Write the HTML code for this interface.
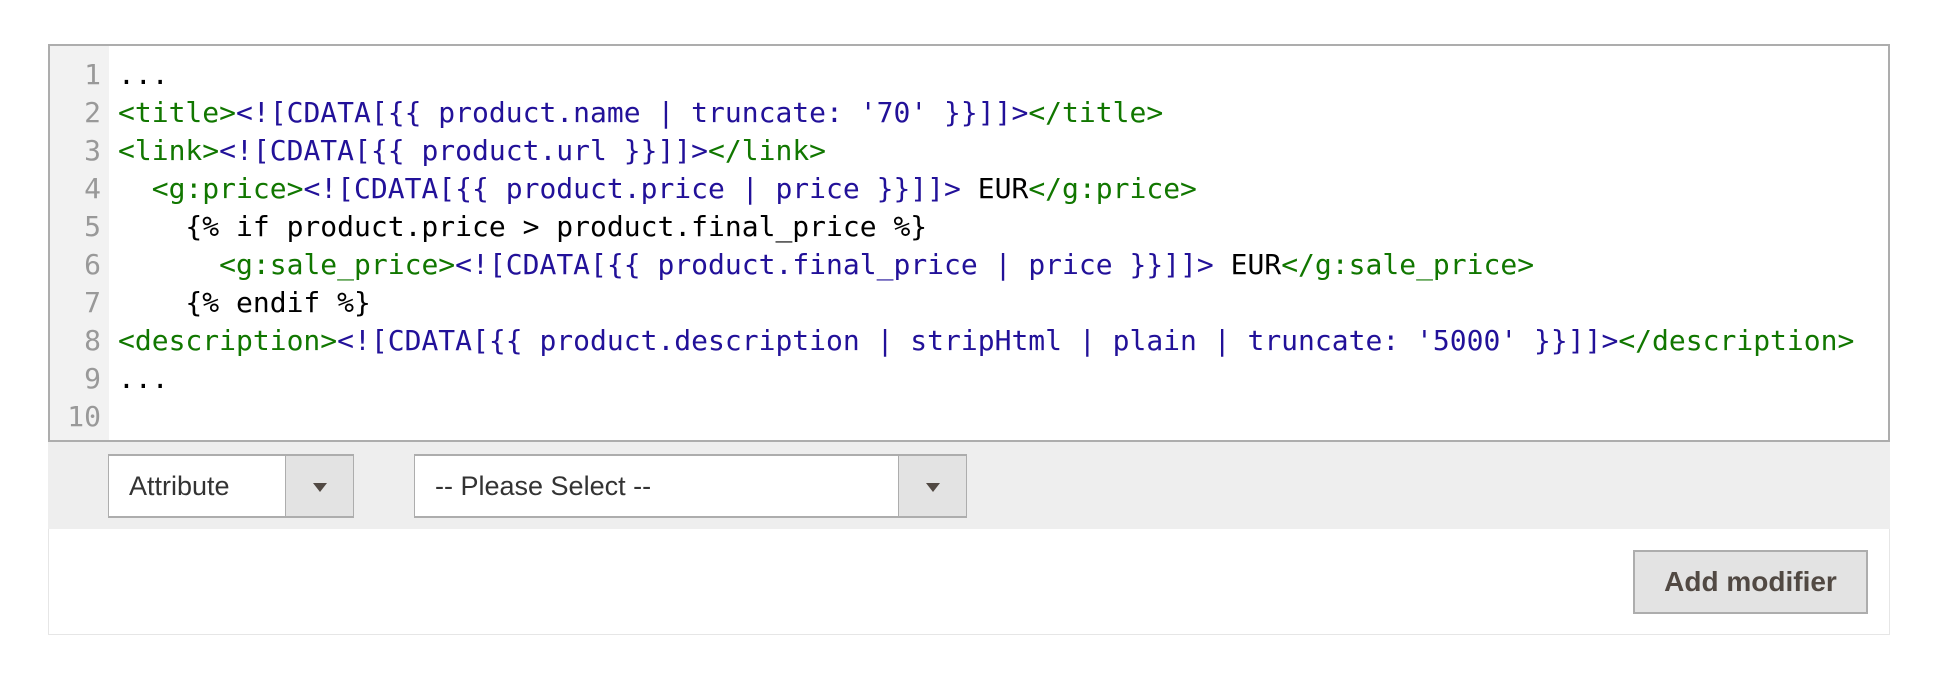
<!DOCTYPE html>
<html><head><meta charset="utf-8"><style>
body{margin:0;background:#fff;width:1934px;height:686px;position:relative;overflow:hidden}
.outer{position:absolute;left:48px;top:44px;width:1840px;height:590px;border:1px solid #e6e6e6;border-top:none}
.code{position:absolute;left:48px;top:44px;border:2px solid #adadad;background:#fff;box-sizing:border-box;width:1842px;height:398px}
.gut{position:absolute;left:0;top:0;width:59px;height:100%;background:#f2f2f2}
.lines{position:absolute;left:0;top:10px;font-family:"DejaVu Sans Mono","Liberation Mono",monospace;font-size:28px;line-height:38px}
.txt{position:absolute;left:68px;top:10px;font-family:"DejaVu Sans Mono","Liberation Mono",monospace;font-size:28px;line-height:38px;white-space:pre;color:#000}
.t{color:#117700}.c{color:#221199}
.bar{position:absolute;left:48px;top:442px;width:1842px;height:87px;background:#eee}
.sel{position:absolute;top:454px;height:64px;border:1px solid #adadad;border-top:2px solid #adadad;border-bottom:2px solid #adadad;background:#fff;box-sizing:border-box;font-family:"Liberation Sans",sans-serif;font-size:27px;color:#333;line-height:60px}
.sel span{position:absolute;left:20px}
.arr{position:absolute;right:0;top:0;bottom:0;width:67px;background:#e3e3e3;border-left:1px solid #adadad}
.arr:after{content:"";position:absolute;left:27px;top:27px;border-left:7px solid transparent;border-right:7px solid transparent;border-top:9px solid #514943}
.btn{position:absolute;left:1633px;top:550px;width:235px;height:64px;box-sizing:border-box;border:2px solid #adadad;background:#e3e3e3;font-family:"Liberation Sans",sans-serif;font-weight:bold;font-size:28px;color:#514943;text-align:center;line-height:60px}
</style></head><body>
<div class="outer"></div>
<div class="code">
<div class="gut"><div class="lines" style="left:0;width:51px;text-align:right;color:#999">1<br>2<br>3<br>4<br>5<br>6<br>7<br>8<br>9<br>10</div></div>
<div class="txt">...
<span class="t">&lt;title&gt;</span><span class="c">&lt;![CDATA[{{ product.name | truncate: '70' }}]]&gt;</span><span class="t">&lt;/title&gt;</span>
<span class="t">&lt;link&gt;</span><span class="c">&lt;![CDATA[{{ product.url }}]]&gt;</span><span class="t">&lt;/link&gt;</span>
  <span class="t">&lt;g:price&gt;</span><span class="c">&lt;![CDATA[{{ product.price | price }}]]&gt;</span> EUR<span class="t">&lt;/g:price&gt;</span>
    {% if product.price &gt; product.final_price %}
      <span class="t">&lt;g:sale_price&gt;</span><span class="c">&lt;![CDATA[{{ product.final_price | price }}]]&gt;</span> EUR<span class="t">&lt;/g:sale_price&gt;</span>
    {% endif %}
<span class="t">&lt;description&gt;</span><span class="c">&lt;![CDATA[{{ product.description | stripHtml | plain | truncate: '5000' }}]]&gt;</span><span class="t">&lt;/description&gt;</span>
...
</div>
</div>
<div class="bar"></div>
<div class="sel" style="left:108px;width:246px"><span>Attribute</span><div class="arr"></div></div>
<div class="sel" style="left:414px;width:553px"><span>-- Please Select --</span><div class="arr"></div></div>
<div class="btn">Add modifier</div>
</body></html>
